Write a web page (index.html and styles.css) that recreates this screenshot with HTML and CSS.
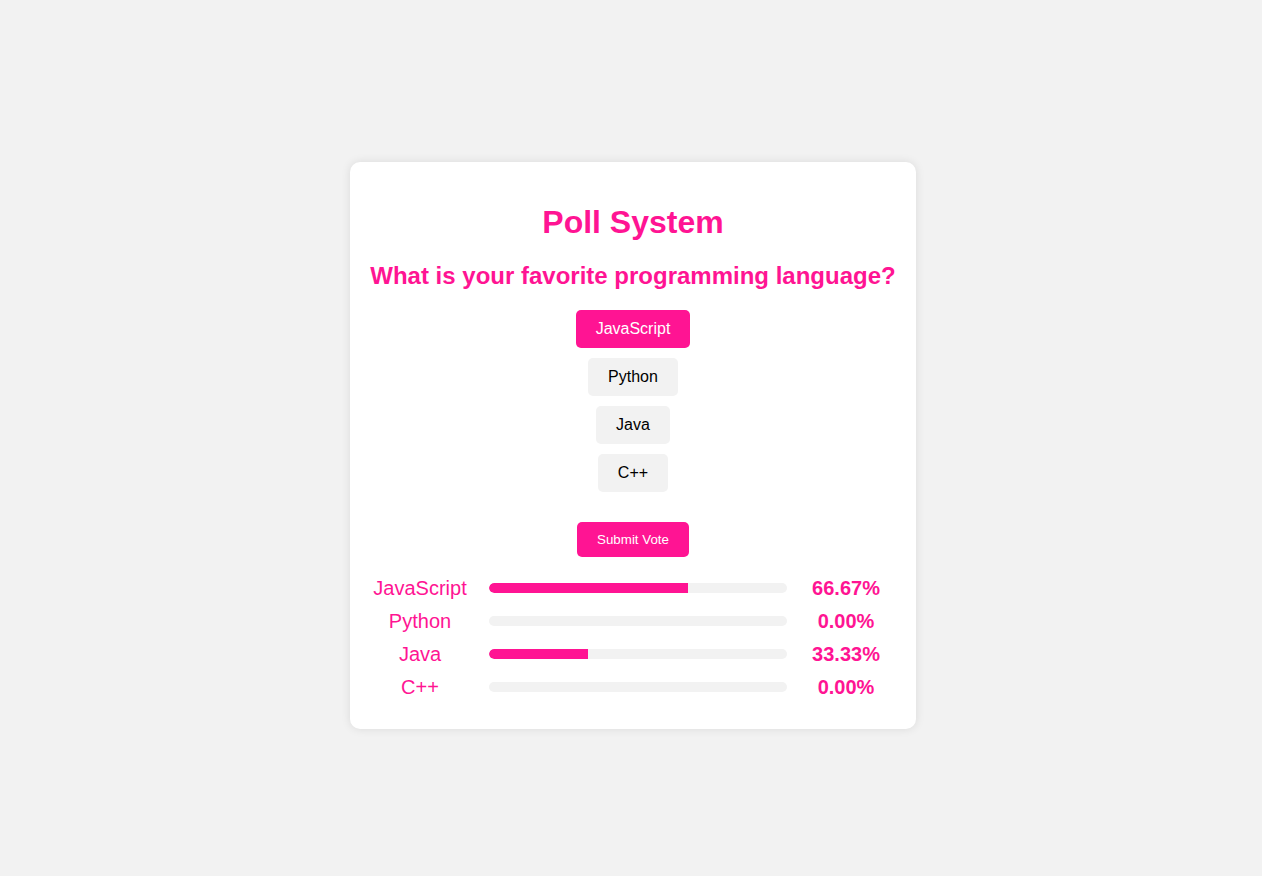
FILE: index.html
```html
<!DOCTYPE html>
<html lang="en">
<head>
<meta charset="utf-8">
<title>Poll System</title>
<link rel="stylesheet" href="styles.css">
</head>
<body>
<div class="card">
  <h1 class="title">Poll System</h1>
  <h2 class="question">What is your favorite programming language?</h2>
  <div class="options">
    <button class="option selected">JavaScript</button>
    <button class="option">Python</button>
    <button class="option">Java</button>
    <button class="option">C++</button>
  </div>
  <button class="submit">Submit Vote</button>
  <div class="results">
    <div class="row"><span class="label">JavaScript</span><div class="bar"><div class="fill" style="width:66.67%"></div></div><span class="pct">66.67%</span></div>
    <div class="row"><span class="label">Python</span><div class="bar"><div class="fill" style="width:0%"></div></div><span class="pct">0.00%</span></div>
    <div class="row"><span class="label">Java</span><div class="bar"><div class="fill" style="width:33.33%"></div></div><span class="pct">33.33%</span></div>
    <div class="row"><span class="label">C++</span><div class="bar"><div class="fill" style="width:0%"></div></div><span class="pct">0.00%</span></div>
  </div>
</div>
</body>
</html>
```
FILE: styles.css
```css
html, body {
  margin: 0;
  padding: 0;
}
body {
  background: #f2f2f2;
  font-family: "Liberation Sans", Arial, sans-serif;
  height: 876px;
  display: flex;
  align-items: center;
  justify-content: center;
}
.card {
  background: #fff;
  border-radius: 10px;
  box-shadow: 0 0 10px rgba(0, 0, 0, 0.1);
  padding: 20px 20px 30px;
  width: 526px;
  text-align: center;
  display: flex;
  flex-direction: column;
  align-items: center;
  margin: 15px 0 0 4px;
}
.title {
  color: #ff1493;
  font-size: 32px;
  font-weight: bold;
  margin: 21.44px 0 21.44px;
  line-height: normal;
}
.question {
  color: #ff1493;
  font-size: 24px;
  font-weight: bold;
  margin: 0 0 20px;
  white-space: nowrap;
  line-height: normal;
}
.options {
  display: flex;
  flex-direction: column;
  align-items: center;
  gap: 10px;
  margin-bottom: 30px;
}
.option {
  font-family: "Liberation Sans", Arial, sans-serif;
  font-size: 16px;
  line-height: 18px;
  padding: 10px 20px;
  border: none;
  border-radius: 5px;
  background: #f2f2f2;
  color: #000;
  cursor: pointer;
}
.option.selected {
  background: #ff1493;
  color: #fff;
}
.submit {
  font-family: "Liberation Sans", Arial, sans-serif;
  font-size: 13.333px;
  line-height: 15px;
  padding: 10px 20px;
  border: none;
  border-radius: 5px;
  background: #ff1493;
  color: #fff;
  cursor: pointer;
}
.results {
  width: 100%;
  margin-top: 20px;
  display: flex;
  flex-direction: column;
  gap: 10px;
}
.row {
  display: grid;
  grid-template-columns: 100px 1fr 80px;
  column-gap: 19px;
  padding-right: 10px;
  align-items: center;
  color: #ff1493;
  font-size: 20px;
  line-height: 23px;
}
.label {
  text-align: center;
}
.bar {
  height: 10px;
  background: #f2f2f2;
  border-radius: 5px;
  overflow: hidden;
}
.fill {
  height: 100%;
  background: #ff1493;
  border-radius: 5px 0 0 5px;
}
.pct {
  font-weight: bold;
  text-align: center;
}
```
